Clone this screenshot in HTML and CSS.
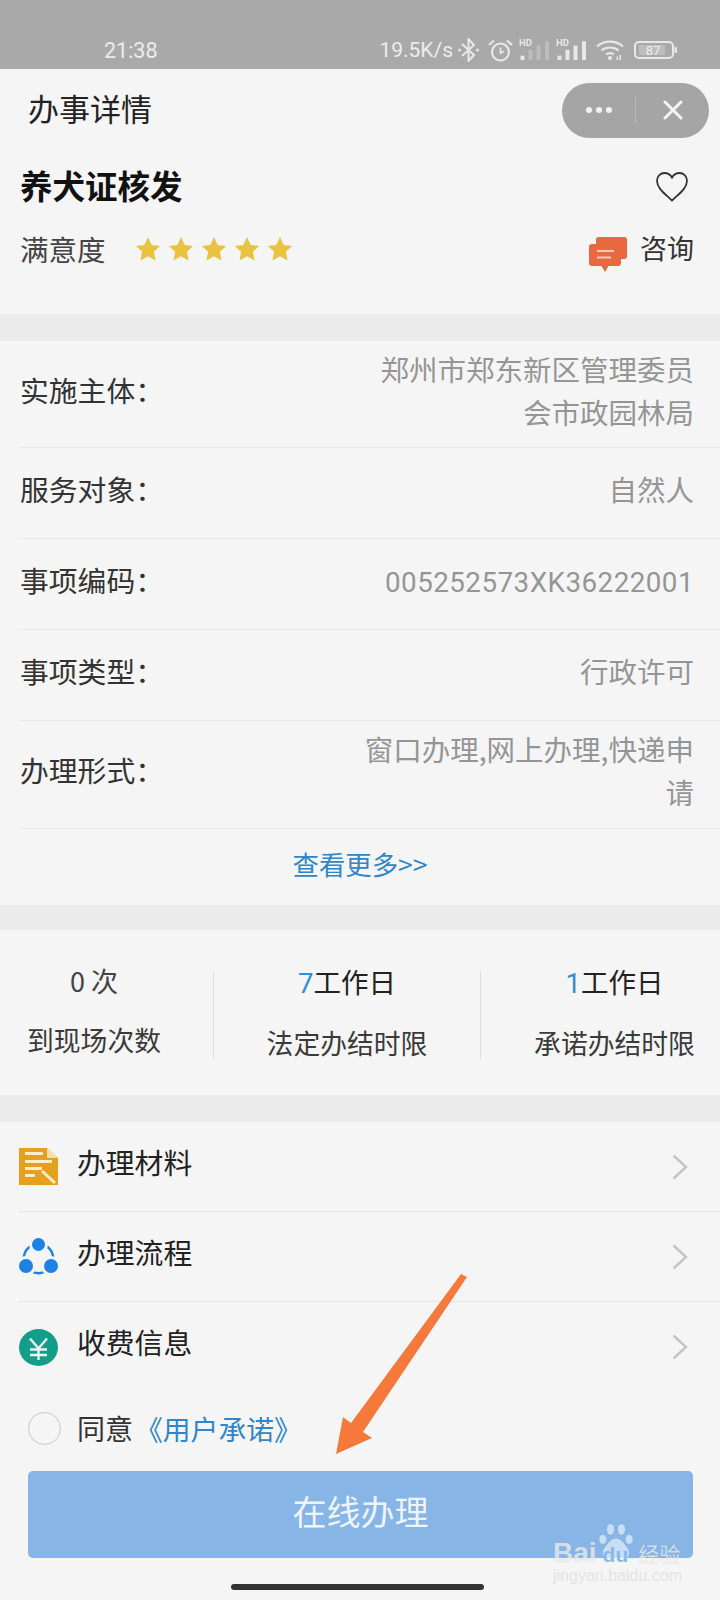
FILE: index.html
```html
<!DOCTYPE html>
<html lang="zh">
<head>
<meta charset="utf-8">
<title>办事详情</title>
<link rel="stylesheet" href="styles.css">
</head>
<body>
<div class="page">
  <header class="status">
    <span class="time">21:38</span>
    <div class="status-right">
      <span class="speed">19.5K/s</span>
      <svg class="si s-bt" width="21" height="24" viewBox="0 0 21 24"><path d="M4 6l12 11-5.500 6V1L16 7 4 18" fill="none" stroke="#e8e8e8" stroke-width="2"/><circle cx="1.500" cy="12" r="1.500" fill="#e8e8e8"/><circle cx="19.500" cy="12" r="1.500" fill="#e8e8e8"/></svg>
      <svg class="si s-al" width="25" height="23" viewBox="0 0 25 23"><circle cx="12.500" cy="13" r="8.500" fill="none" stroke="#e8e8e8" stroke-width="2.200"/><path d="M12.500 8.500V14l3.500-1.800" fill="none" stroke="#e8e8e8" stroke-width="1.700"/><path d="M1 6l5-4.500M24 6l-5-4.500" stroke="#e8e8e8" stroke-width="2.200"/></svg>
      <span class="signal s-sig"><i class="hd">HD</i><svg width="31" height="19" viewBox="0 0 31 19"><rect x="1.500" y="14.700" width="4" height="4.300" fill="#e8e8e8"/><g fill="#bdbdbd"><rect x="9.500" y="9" width="4" height="10"/><rect x="17.500" y="4.500" width="4" height="14.500"/><rect x="26" y=".3" width="4" height="18.700"/></g></svg></span>
      <span class="signal s-sig"><i class="hd">HD</i><svg width="31" height="19" viewBox="0 0 31 19"><g fill="#e8e8e8"><rect x="1.500" y="14.700" width="4" height="4.300"/><rect x="9.500" y="9" width="4" height="10"/><rect x="17.500" y="4.500" width="4" height="14.500"/><rect x="26" y=".3" width="4" height="18.700"/></g></svg></span>
      <svg class="si s-wi" width="28" height="20" viewBox="0 0 28 20"><g fill="none" stroke="#e8e8e8" stroke-width="2.200"><path d="M1 6.500c7-6.500 19-6.500 26 0"/><path d="M5.500 10.500c4.500-4 12.500-4 17 0"/><path d="M10 14.500c2-1.800 6-1.800 8 0"/></g><circle cx="14" cy="18" r="2" fill="#e8e8e8"/><path d="M20.500 16.500H22V20h-1.500zM23.500 15H25v5h-1.500z" fill="#e8e8e8"/></svg>
      <svg class="si s-ba" width="43" height="18" viewBox="0 0 43 18"><rect x="1" y="1" width="38" height="16" rx="4" fill="none" stroke="#e8e8e8" stroke-width="2"/><rect x="5" y="4" width="26" height="10" fill="#bdbdbd"/><rect x="40.500" y="6" width="2.500" height="6" rx="1" fill="#e8e8e8"/><text x="19" y="14" text-anchor="middle" class="batt-num">87</text></svg>
    </div>
  </header>

  <nav class="nav">
    <span class="nav-title">办事详情</span>
    <div class="capsule">
      <span class="cap-side"><i class="dot"></i><i class="dot"></i><i class="dot"></i></span>
      <span class="cap-line"></span>
      <span class="cap-side"><svg width="20" height="20" viewBox="0 0 20 20"><path d="M2 2l16 16M18 2L2 18" stroke="#f4f4f4" stroke-width="3" stroke-linecap="round"/></svg></span>
    </div>
  </nav>

  <section class="head">
    <div class="head-row">
      <h1 class="title">养犬证核发</h1>
      <svg class="heart" width="32" height="30" viewBox="0 0 32 30"><path d="M16 28.500C8 21 1 16 1 8.700 1 4.300 4.500 1 8.500 1c3.200 0 5.800 1.700 7.500 4.500C17.700 2.700 20.300 1 23.500 1 27.500 1 31 4.300 31 8.700 31 16 24 21 16 28.500z" fill="none" stroke="#333" stroke-width="1.800"/></svg>
    </div>
    <div class="head-row sat">
      <div class="sat-left">
        <span class="sat-label">满意度</span>
        <div class="stars">
          <svg width="26" height="26" viewBox="0 0 26 26"><path class="star" d="M13 1l3.700 7.900 8.300 1-6.100 5.900 1.600 8.600L13 20.200l-7.500 4.200 1.600-8.600L1 9.900l8.300-1z"/></svg>
          <svg width="26" height="26" viewBox="0 0 26 26"><path class="star" d="M13 1l3.700 7.900 8.300 1-6.100 5.900 1.600 8.600L13 20.200l-7.500 4.200 1.600-8.600L1 9.900l8.300-1z"/></svg>
          <svg width="26" height="26" viewBox="0 0 26 26"><path class="star" d="M13 1l3.700 7.900 8.300 1-6.100 5.900 1.600 8.600L13 20.200l-7.500 4.200 1.600-8.600L1 9.900l8.300-1z"/></svg>
          <svg width="26" height="26" viewBox="0 0 26 26"><path class="star" d="M13 1l3.700 7.900 8.300 1-6.100 5.900 1.600 8.600L13 20.200l-7.500 4.200 1.600-8.600L1 9.900l8.300-1z"/></svg>
          <svg width="26" height="26" viewBox="0 0 26 26"><path class="star" d="M13 1l3.700 7.900 8.300 1-6.100 5.900 1.600 8.600L13 20.200l-7.500 4.200 1.600-8.600L1 9.900l8.300-1z"/></svg>
        </div>
      </div>
      <div class="consult">
        <svg width="38" height="35" viewBox="0 0 38 35"><rect x="7" y="0" width="31" height="22" rx="3" fill="#e8693f"/><path d="M3 7h26a3 3 0 0 1 3 3v16a3 3 0 0 1-3 3H19.500L16 35l-3.500-6H3a3 3 0 0 1-3-3V10a3 3 0 0 1 3-3z" fill="#e8693f"/><path d="M8 14h17M8 20.500h14" stroke="#f6c9b4" stroke-width="1.800"/></svg>
        <span class="consult-text">咨询</span>
      </div>
    </div>
  </section>

  <div class="band"></div>

  <section class="rows">
    <div class="row r-two"><span class="k">实施主体：</span><span class="v">郑州市郑东新区管理委员<br>会市政园林局</span></div>
    <div class="row r-one"><span class="k">服务对象：</span><span class="v">自然人</span></div>
    <div class="row r-one"><span class="k">事项编码：</span><span class="v num">005252573XK36222001</span></div>
    <div class="row r-one"><span class="k">事项类型：</span><span class="v">行政许可</span></div>
    <div class="row r-form"><span class="k">办理形式：</span><span class="v">窗口办理,网上办理,快递申<br>请</span></div>
    <div class="more"><span class="more-text">查看更多&gt;&gt;</span></div>
  </section>

  <div class="band b2"></div>

  <section class="stats">
    <div class="stat"><div class="stat-top gray">0 次</div><div class="stat-sub">到现场次数</div></div>
    <div class="stat bordered"><div class="stat-top"><span class="blue">7</span>工作日</div><div class="stat-sub">法定办结时限</div></div>
    <div class="stat bordered"><div class="stat-top"><span class="blue">1</span>工作日</div><div class="stat-sub">承诺办结时限</div></div>
  </section>

  <div class="band"></div>

  <section class="list">
    <div class="item">
      <svg width="39" height="37" viewBox="0 0 39 37"><path d="M0 0h28l11 10v27H0z" fill="#e5a11e"/><path d="M28 0l11 10H28z" fill="#f6dfa8"/><g fill="none" stroke="#fbeecb" stroke-width="3"><path d="M6 5.500h18M6 13.500h27M6 20.500h17M6 27.500h10"/><path d="M23 23l13 12"/></g></svg>
      <span class="item-text">办理材料</span>
      <svg class="chev" width="16" height="26" viewBox="0 0 16 26"><path d="M1.500 1.500L14 13 1.500 24.500" fill="none" stroke="#c4c4c4" stroke-width="2.400"/></svg>
    </div>
    <div class="item">
      <svg width="39" height="37" viewBox="0 0 39 37"><circle cx="19.500" cy="20.500" r="14.700" fill="none" stroke="#1d82e6" stroke-width="2.400"/><g fill="#1d82e6" stroke="#f5f5f5" stroke-width="3"><circle cx="19.500" cy="6.500" r="8"/><circle cx="7" cy="28" r="8.500"/><circle cx="32" cy="28" r="8.500"/></g></svg>
      <span class="item-text">办理流程</span>
      <svg class="chev" width="16" height="26" viewBox="0 0 16 26"><path d="M1.500 1.500L14 13 1.500 24.500" fill="none" stroke="#c4c4c4" stroke-width="2.400"/></svg>
    </div>
    <div class="item last">
      <svg width="39" height="37" viewBox="0 0 39 37"><ellipse cx="19.500" cy="18.500" rx="19.500" ry="18.500" fill="#149e8a"/><path d="M11 9.500l8.500 10 8.500-10M11 20.500h17M11 26h17M19.500 19v12" fill="none" stroke="#e9f6f3" stroke-width="2.400"/></svg>
      <span class="item-text">收费信息</span>
      <svg class="chev" width="16" height="26" viewBox="0 0 16 26"><path d="M1.500 1.500L14 13 1.500 24.500" fill="none" stroke="#c4c4c4" stroke-width="2.400"/></svg>
    </div>
  </section>

  <div class="agree">
    <span class="radio"></span>
    <span class="agree-text">同意</span><span class="link">《用户承诺》</span>
  </div>

  <div class="btn">在线办理</div>
  <div class="homebar"></div>

  <svg class="arrow" width="140" height="190" viewBox="0 0 140 190"><path d="M131 4l6 3L33 162l9 6-36 16 7-37 8 6z" fill="#f5793b"/></svg>

  <div class="wm">
    <svg class="paw" width="38" height="40" viewBox="0 0 38 44"><g fill="#fff" fill-opacity=".55"><ellipse cx="13" cy="7" rx="4" ry="6"/><ellipse cx="25" cy="7" rx="4" ry="6"/><ellipse cx="4.500" cy="18" rx="3.800" ry="5"/><ellipse cx="33.500" cy="18" rx="3.800" ry="5"/><path d="M19 17c6 0 9 6 13 11 3 5 1 13-6 12-3 0-5-1-7-1s-4 1-7 1c-7 1-9-7-6-12 4-5 7-11 13-11z"/></g></svg>
    <div class="wm-main"><span>Bai</span><span class="wm-du">du</span><span class="wm-cn">经验</span></div>
    <div class="wm-url">jingyan.baidu.com</div>
  </div>
</div>
</body>
</html>
```
FILE: styles.css
```css
* { box-sizing: border-box; }
html, body { margin: 0; padding: 0; }
body {
  width: 720px;
  height: 1600px;
  overflow: hidden;
  background: #f5f5f5;
  font-family: "Noto Sans CJK SC", "Roboto", sans-serif;
  color: #2a2a2a;
}
.page { position: relative; width: 720px; height: 1600px; overflow: hidden; }

.status {
  height: 69px;
  background: #a9a9a9;
  color: #ececec;
  display: flex;
  align-items: center;
  justify-content: space-between;
  padding: 31px 43px 0 104px;
  font-family: "Roboto", sans-serif;
}
.time { font-size: 21.500px; }
.status-right { display: flex; align-items: center; }
.speed { font-size: 21px; }
.si { display: block; }
.s-bt { margin-left: 5px; }
.s-al { margin-left: 9px; }
.s-sig { margin-left: 6px; }
.s-wi { margin-left: 9px; }
.s-ba { margin-left: 10px; }
.signal { position: relative; display: block; width: 31px; height: 19px; }
.signal svg { display: block; }
.hd { position: absolute; left: 0; top: -3px; font-size: 9.500px; line-height: 10px; font-style: normal; font-weight: 700; color: #e8e8e8; }
.batt-num { font-family: "Roboto", sans-serif; font-size: 13px; fill: #eee; }

.nav {
  height: 82px;
  display: flex;
  align-items: center;
  justify-content: space-between;
  padding: 0 11px 0 28px;
}
.nav-title { font-size: 31px; line-height: 40px; margin-top: -4px; color: #222; }
.capsule {
  width: 147px;
  height: 55px;
  border-radius: 28px;
  background: #a5a5a5;
  display: flex;
  align-items: center;
}
.cap-side { flex: 1; display: flex; justify-content: center; align-items: center; gap: 4px; }
.cap-line { width: 1px; height: 26px; background: #bbb; }
.dot { width: 6px; height: 6px; border-radius: 50%; background: #f2f2f2; }

.head { height: 163px; padding: 12px 26px 0 20px; }
.head-row { display: flex; align-items: center; justify-content: space-between; height: 48px; }
.title { margin: -4px 0 0; font-size: 32.500px; line-height: 48px; font-weight: 700; color: #111; }
.head-row svg { display: block; }
.heart { margin-right: 6px; }
.sat { margin-top: 14px; }
.sat-left { display: flex; align-items: center; gap: 29px; }
.sat-label { font-size: 28.500px; line-height: 40px; color: #444; }
.stars { display: flex; gap: 7px; }
.star { fill: #e9c33f; }
.consult { display: flex; align-items: center; gap: 13px; }
.consult svg { margin-top: 10px; }
.consult-text { font-size: 27px; line-height: 36px; color: #333; margin-top: -2px; }

.band { height: 27px; background: #ececec; }
.b2 { height: 25px; }

.rows { padding-left: 20px; }
.row {
  display: flex;
  align-items: center;
  justify-content: space-between;
  padding-right: 26px;
  border-bottom: 1px solid #e8e8e8;
}
.r-two { height: 107px; }
.r-one { height: 91px; }
.r-form { height: 108px; }
.k { font-size: 28.800px; line-height: 40px; margin-top: -9px; color: #333; white-space: nowrap; }
.v { font-size: 28.500px; line-height: 43px; margin-top: -9px; color: #959595; text-align: right; }
.num { font-family: "Roboto", sans-serif; font-size: 27.800px; letter-spacing: .45px; margin-top: -4px; }
.more {
  height: 76px;
  margin-left: -20px;
  display: flex;
  align-items: center;
  justify-content: center;
}
.more-text { font-size: 26.400px; line-height: 40px; margin-top: -6px; color: #2f86c9; }

.stats { height: 165px; display: flex; padding-top: 41px; }
.stat { text-align: center; height: 88px; }
.stat:nth-child(1) { width: 213px; padding-right: 25px; }
.stat:nth-child(2) { width: 267px; }
.stat:nth-child(3) { flex: 1; padding-left: 28px; }
.bordered { border-left: 1px solid #dedede; }
.stat-top { font-size: 27.500px; line-height: 36px; margin-top: -8px; color: #222; }
.gray { font-size: 27px; color: #444; }
.blue { color: #2f8fd6; font-family: "Roboto", sans-serif; }
.stat-sub { font-size: 26.800px; line-height: 36px; margin-top: 23px; color: #3a3a3a; white-space: nowrap; }

.list { padding-left: 19px; }
.item {
  height: 90px;
  display: flex;
  align-items: center;
  border-bottom: 1px solid #e6e6e6;
  padding-right: 32px;
}
.item svg { display: block; flex: none; }
.last { border-bottom: none; }
.item-text { flex: 1; margin-left: 19px; font-size: 28.800px; line-height: 40px; color: #222; margin-top: -10px; }

.agree { height: 79px; display: flex; align-items: center; padding: 0 0 7px 28px; }
.radio { width: 33px; height: 33px; border: 1px solid #c8c8c8; border-radius: 50%; margin-right: 16px; }
.agree-text { font-size: 28px; color: #333; }
.link { font-size: 27.800px; color: #2f86c9; margin-left: 2px; }

.btn {
  margin: 0 27px 0 28px;
  height: 87px;
  border-radius: 5px;
  background: #86b5e6;
  color: #eef4fb;
  font-size: 34px;
  padding-bottom: 8px;
  display: flex;
  align-items: center;
  justify-content: center;
}
.homebar { width: 253px; height: 6px; margin: 26px 0 0 231px; border-radius: 3px; background: #333; }

.arrow { position: absolute; left: 330px; top: 1270px; }

.wm { position: absolute; left: 550px; top: 1520px; width: 130px; height: 76px; font-family: "Liberation Sans", sans-serif; }
.paw { position: absolute; left: 47px; top: 3px; }
.wm-main { position: absolute; left: 3px; top: 16px; font-size: 28px; line-height: 34px; font-weight: 700; white-space: nowrap; color: rgba(255,255,255,.6); text-shadow: 0 0 1px rgba(170,170,170,.5); }
.wm-du { font-size: 21px; color: rgba(134,181,230,.95); text-shadow: none; margin: 0 10px 0 6px; }
.wm-cn { font-family: "Noto Sans CJK SC", sans-serif; font-size: 21px; font-weight: 400; }
.wm-url { position: absolute; left: 3px; top: 47px; font-size: 16px; color: #e4e4e4; white-space: nowrap; }
```
